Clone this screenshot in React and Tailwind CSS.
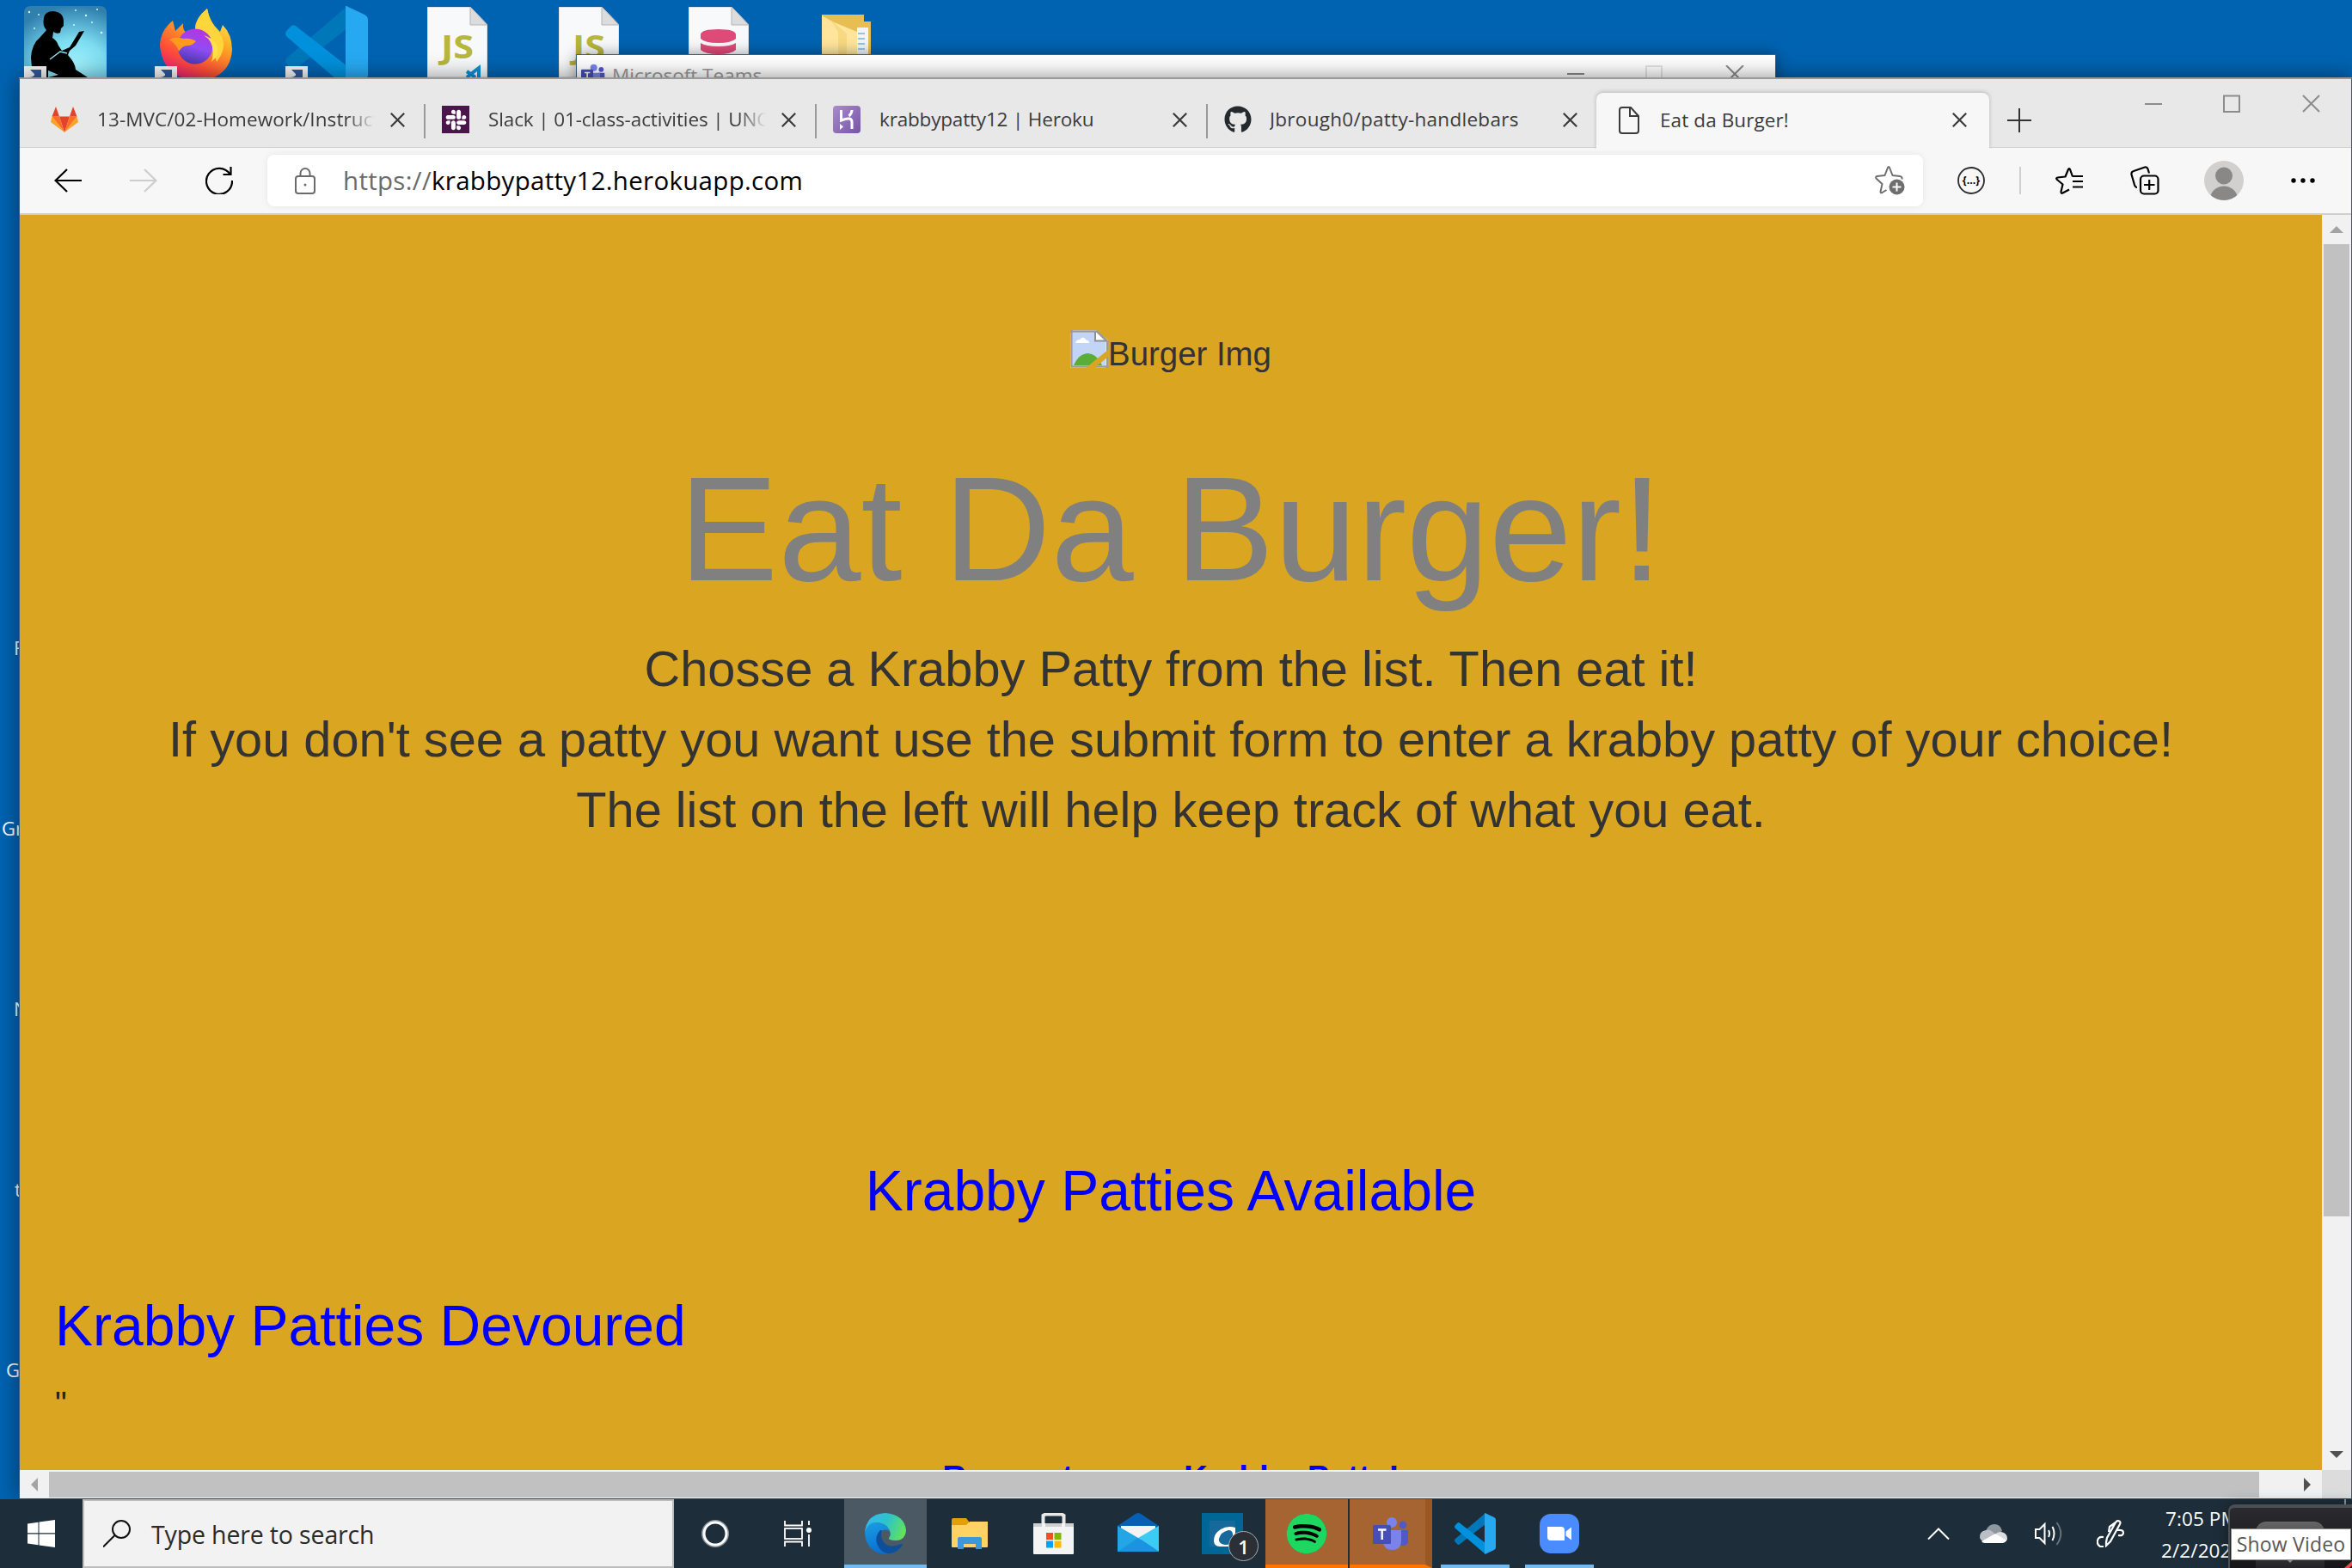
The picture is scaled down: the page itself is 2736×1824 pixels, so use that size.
import React from "react";
import { FaGithub, FaSpotify, FaSlack } from "react-icons/fa";

function VsCode({ className }) {
  return (
    <svg viewBox="0 0 96 96" preserveAspectRatio="none" className={className}>
      <path d="M72 0 2 60Q-2 64 2 68L7 73Q10 75 13 72L72 26Z" fill="#0077b9" />
      <path d="M72 96 2 36Q-2 32 2 28L7 23Q10 21 13 24L72 70Z" fill="#0190db" />
      <path d="M70 0Q72 0 73 1L92 10Q96 12 96 16V80Q96 84 92 86L73 95Q71 96 70 95Z" fill="#27a9f2" />
    </svg>
  );
}

function Shortcut({ className }) {
  return (
    <svg viewBox="0 0 26 13" className={className}>
      <rect width="26" height="13" fill="#f4f4f4" />
      <path d="M7 4H20V13H6Q13 12 12 9Z" fill="#31599b" />
    </svg>
  );
}

function DocIcon({ children, className }) {
  return (
    <svg viewBox="0 0 70 82" className={className}>
      <path d="M0 0H50L70 21V82H0Z" fill="#f8f9fa" stroke="#c9c9c9" />
      <path d="M50 0 70 21H50Z" fill="#dcdcdc" stroke="#b5b5b5" />
      {children}
    </svg>
  );
}

function TeamsIcon({ className }) {
  return (
    <svg viewBox="0 0 42 38" className={className}>
      <circle cx="22" cy="6" r="6" fill="#7b83eb" />
      <circle cx="35" cy="9" r="4.400" fill="#5059c9" />
      <path d="M30 15H41V27Q41 33 35 33H30Z" fill="#5059c9" />
      <path d="M12 15H33V27Q33 38 22.500 38T12 27Z" fill="#7b83eb" />
      <rect y="9" width="21" height="22" rx="1.500" fill="#464eb8" />
      <path d="M6 14.500H15.500M10.700 15V26" stroke="#fff" strokeWidth="2.400" fill="none" />
    </svg>
  );
}

function Kindle() {
  return (
    <svg viewBox="0 0 96 83" className="absolute left-[28px] top-[7px] h-[83px] w-[96px]">
      <defs>
        <radialGradient id="sky" cx=".6" cy=".85" r=".85">
          <stop offset="0" stopColor="#a5f4ff" />
          <stop offset=".45" stopColor="#7cdcf0" />
          <stop offset="1" stopColor="#3080ae" />
        </radialGradient>
      </defs>
      <path d="M8 0H88Q96 0 96 8V83H0V8Q0 0 8 0Z" fill="url(#sky)" />
      <g fill="#d5f4ff">
        <circle cx="6" cy="7" r="1.200" /><circle cx="17" cy="10" r="1" /><circle cx="60" cy="5" r="1" /><circle cx="72" cy="11" r="1.200" />
        <circle cx="85" cy="4" r="1" /><circle cx="90" cy="31" r="1.300" /><circle cx="12" cy="26" r="1" /><circle cx="58" cy="22" r="1" /><circle cx="79" cy="19" r="1" />
      </g>
      <path d="M23 14Q24 6 34 6Q46 7 46 18L46 23L43 26L42 31Q38 33 34 30L33 37Q38 40 40 46L44 52L53 48L61 35L64 30L70 29L60 46L53 52L51 57Q60 67 60 74L74 83H28L40 80L28 75L28 83H10L8 60Q9 44 18 37L26 28Q21 23 23 14Z" fill="#000" />
      <path d="M30 62 42 53 50 55" stroke="#8ee6f6" strokeWidth="1.500" fill="none" />
    </svg>
  );
}

function Firefox() {
  return (
    <svg viewBox="0 0 84 84" className="absolute left-[186px] top-[10px] h-[84px] w-[84px]">
      <defs>
        <linearGradient id="fx" x1=".8" y1="0" x2=".2" y2="1">
          <stop offset="0" stopColor="#fff44f" />
          <stop offset=".35" stopColor="#ffa624" />
          <stop offset=".7" stopColor="#ff4f36" />
          <stop offset="1" stopColor="#e31587" />
        </linearGradient>
        <linearGradient id="fxp" x1=".6" y1="0" x2=".3" y2="1">
          <stop offset="0" stopColor="#b833e1" />
          <stop offset=".5" stopColor="#8f4cf5" />
          <stop offset="1" stopColor="#4838a8" />
        </linearGradient>
      </defs>
      <path d="M15 14 18 26 27 17Q26 25 31 28L41 24Q40 12 55 0Q56 14 70 27L73 19Q84 30 84 48Q82 80 46 84Q4 82 0 44Q0 26 15 14Z" fill="url(#fx)" />
      <path d="M55 0Q58 16 70 29Q80 44 66 62L60 40Q56 24 41 25Q41 12 55 0Z" fill="#ffd53c" />
      <circle cx="41" cy="44" r="20.500" fill="url(#fxp)" />
      <path d="M11 36Q18 32 27 35Q36 34 42 38Q38 43 32 43Q26 43 22 50Q20 42 11 36Z" fill="#ff9a1e" />
      <path d="M51 31Q66 40 60 62L66 56Q72 38 51 31Z" fill="#ffe04a" />
    </svg>
  );
}

function DesktopIcons() {
  return (
    <div className="font-['Open_Sans',sans-serif] text-[22px] leading-[30px] text-white">
      <Kindle />
      <Shortcut className="absolute left-[28px] top-[77px] h-[13px] w-[26px]" />
      <Firefox />
      <Shortcut className="absolute left-[180px] top-[77px] h-[13px] w-[26px]" />
      <VsCode className="absolute left-[332px] top-[7px] h-[96px] w-[96px]" />
      <Shortcut className="absolute left-[332px] top-[77px] h-[13px] w-[26px]" />
      <DocIcon className="absolute left-[497px] top-[8px] h-[82px] w-[70px]">
        <text x="16" y="60" fontSize="38" fontWeight="700" fill="#b7b73b" fontFamily="Open Sans, sans-serif" textLength="38" lengthAdjust="spacingAndGlyphs">JS</text>
        <path d="M46 75 56 82M46 82 56 74 60 71V82" stroke="#0b8fd8" strokeWidth="4" fill="none" />
      </DocIcon>
      <DocIcon className="absolute left-[650px] top-[8px] h-[82px] w-[70px]">
        <text x="16" y="60" fontSize="38" fontWeight="700" fill="#b7b73b" fontFamily="Open Sans, sans-serif" textLength="38" lengthAdjust="spacingAndGlyphs">JS</text>
      </DocIcon>
      <DocIcon className="absolute left-[801px] top-[8px] h-[82px] w-[70px]">
        <path d="M14 32Q15 26 34.500 26T55 32V37Q50 42 34.500 42T14 37Z" fill="#df4b78" />
        <path d="M14 42Q20 46 34.500 46T55 42V50Q50 55 34.500 55T14 50Z" fill="#df4b78" />
      </DocIcon>
      <svg viewBox="0 0 58 50" className="absolute left-[956px] top-[17px] h-[50px] w-[58px]">
        <path d="M0 0H49V8H57V50H0Z" fill="#e8bd51" />
        <path d="M41 15H54V50H41Z" fill="#f2f5f7" />
        <path d="M42 22H50M42 28H50M42 34H50M42 40H50" stroke="#3d95c9" strokeWidth="1.200" />
        <path d="M0 1 12 8 41 20V50H0Z" fill="#ffe59b" />
        <path d="M10 6 29 22V50H19V20Z" fill="#f7d982" />
      </svg>
      <span className="absolute left-[16px] top-[738px]">F</span>
      <span className="absolute left-[2px] top-[948px]">Gr</span>
      <span className="absolute left-[16px] top-[1158px]">N</span>
      <span className="absolute left-[17px] top-[1368px]">t</span>
      <span className="absolute left-[7px] top-[1578px]">G</span>
    </div>
  );
}

function TeamsWindow() {
  return (
    <div className="absolute left-[670px] top-[63px] flex h-[60px] w-[1396px] items-start border border-[#3d5f80] bg-white shadow-[0_0_16px_rgba(0,0,0,0.4)]">
      <TeamsIcon className="ml-[5px] mt-[10px] h-[27px] w-[28px]" />
      <span className="ml-[8px] mt-[8px] whitespace-nowrap font-['Open_Sans',sans-serif] text-[22.500px] leading-[32px] text-[#999]">Microsoft Teams</span>
      <svg viewBox="0 0 206 24" className="ml-auto mr-[36px] mt-[12px] h-[24px] w-[206px]" fill="none" strokeWidth="2">
        <path d="M0 10H20" stroke="#8a8a8a" />
        <rect x="92" y="1" width="18" height="20" stroke="#e3e3e3" />
        <path d="M185 0 205 20M205 0 185 20" stroke="#8a8a8a" />
      </svg>
    </div>
  );
}

function CloseX({ className }) {
  return (
    <svg viewBox="0 0 17 17" className={className} fill="none" stroke="#3b3b3b" strokeWidth="2.200">
      <path d="M.8.8 16.200 16.200M16.200.8.8 16.200" />
    </svg>
  );
}

function Gitlab() {
  return (
    <svg viewBox="0 0 32 30" className="h-[30px] w-[32px]">
      <path d="M16 30 10 11.500H22Z" fill="#e24329" />
      <path d="M16 30 10 11.500H1.500Z" fill="#fc6d26" />
      <path d="M16 30 22 11.500H30.500Z" fill="#fc6d26" />
      <path d="M1.500 11.500 0 18 16 30ZM30.500 11.500 32 18 16 30Z" fill="#fca326" />
      <path d="M1.500 11.500 6 0 10 11.500ZM30.500 11.500 26 0 22 11.500Z" fill="#e24329" />
    </svg>
  );
}

function Heroku() {
  return (
    <svg viewBox="0 0 32 32" className="h-[32px] w-[32px]">
      <defs>
        <linearGradient id="hk" x1="0" y1="0" x2="1" y2="1">
          <stop offset="0" stopColor="#a98bcf" />
          <stop offset="1" stopColor="#7655a3" />
        </linearGradient>
      </defs>
      <rect width="32" height="32" rx="4" fill="url(#hk)" />
      <path d="M9.500 5V17Q22 12 22 19V27M22 5Q22 9 18.500 12" fill="none" stroke="#fff" strokeWidth="3" />
      <path d="M8 21 12 24.500 8 28Z" fill="#fff" />
    </svg>
  );
}

const tabs = [
  { title: "13-MVC/02-Homework/Instructions", fade: true, icon: <Gitlab />, cls: "tracking-[0.080px]" },
  {
    title: "Slack | 01-class-activities | UNC-RAL",
    fade: true,
    icon: <span className="flex h-[32px] w-[32px] items-center justify-center bg-[#4a154b]"><FaSlack className="h-[27px] w-[27px] text-white" /></span>,
    cls: "tracking-[-0.120px]",
  },
  { title: "krabbypatty12 | Heroku", icon: <Heroku />, cls: "tracking-[-0.180px]" },
  { title: "Jbrough0/patty-handlebars", icon: <FaGithub className="h-[32px] w-[32px] text-[#24292e]" />, cls: "-ml-[1px] tracking-[0.280px]" },
];

function TabBar() {
  return (
    <div className="flex h-[80px] border-b border-[#d0d0d0] bg-[#e8e8e8] pl-[16px] text-[#3b3b3b]">
      {tabs.map((t, i) => (
        <div key={t.title} className="relative flex w-[455px] shrink-0 items-center pl-[20px] pt-[15px]">
          <span className="flex w-[54px]">{t.icon}</span>
          <span className={"w-[323px] overflow-hidden whitespace-nowrap text-[22.500px] leading-[32px] " + t.cls + (t.fade ? " [mask-image:linear-gradient(to_right,#000_90%,transparent)]" : "")}>{t.title}</span>
          <CloseX className="ml-[18px] h-[17px] w-[17px]" />
          {i < 3 && <span className="absolute right-[-1px] top-[29px] h-[40px] w-[2px] bg-[#9a9a9a]" />}
        </div>
      ))}
      <div className="relative -ml-[2px] mt-[16px] flex h-[65px] w-[457px] shrink-0 items-center rounded-t-lg bg-[#f7f7f7] pb-[2px] pl-[26px] shadow-[0_-1px_5px_rgba(0,0,0,0.22)] [clip-path:inset(-8px_-8px_0_-8px)]">
        <svg viewBox="0 0 24 32" className="h-[32px] w-[24px]" fill="none" stroke="#3b3b3b" strokeWidth="2">
          <path d="M4 1H14L23 11V28Q23 31 20 31H4Q1 31 1 28V4Q1 1 4 1ZM13 1V11H23" />
        </svg>
        <span className="ml-[24px] w-[323px] text-[22.500px] leading-[32px] tracking-[0.100px]">Eat da Burger!</span>
        <CloseX className="ml-[17px] h-[17px] w-[17px]" />
      </div>
      <svg viewBox="0 0 28 28" className="ml-[21px] mt-[34px] h-[28px] w-[28px]" stroke="#333" strokeWidth="2">
        <path d="M0 14H28M14 0V28" />
      </svg>
      <svg viewBox="0 0 204 22" className="ml-auto mr-[36px] mt-[18px] h-[22px] w-[204px]" fill="none" stroke="#8c8c8c" strokeWidth="2">
        <path d="M0 11H20M184 1 203 20M203 1 184 20" />
        <rect x="92" y="1.500" width="18" height="18.500" />
      </svg>
    </div>
  );
}

function Toolbar() {
  return (
    <div className="flex h-[78px] items-center border-b-2 border-[#cfcfcf] bg-[#f7f7f7]">
      <svg viewBox="0 0 32 28" className="ml-[40px] h-[28px] w-[32px] shrink-0" fill="none" stroke="#000" strokeWidth="2.200">
        <path d="M32 14H1.500M15 1 1.500 14 15 27" />
      </svg>
      <svg viewBox="0 0 32 28" className="ml-[56px] h-[28px] w-[32px] shrink-0" fill="none" stroke="#cdcdcd" strokeWidth="2.200">
        <path d="M0 14H30.500M17 1 30.500 14 17 27" />
      </svg>
      <svg viewBox="0 0 32 32" className="ml-[56px] h-[32px] w-[32px] shrink-0" fill="none" stroke="#000" strokeWidth="2.200">
        <path d="M28.500 8.500A15 15 0 1 0 31 16M29.500 0V9H20.500" />
      </svg>
      <div className="ml-[40px] flex h-[60px] w-[1926px] shrink-0 items-center rounded-lg bg-white shadow-[0_0_8px_rgba(0,0,0,0.07)]">
        <svg viewBox="0 0 24 31" className="ml-[32px] h-[31px] w-[24px]" fill="none" stroke="#6b6b6b" strokeWidth="2">
          <rect x="1" y="10" width="22" height="20" rx="3" />
          <path d="M6.500 10V6.500A5.500 5.500 0 0 1 17.500 6.500V10" />
          <circle cx="12" cy="20" r="1.500" fill="#6b6b6b" stroke="none" />
        </svg>
        <span className="ml-[32px] whitespace-nowrap text-[29.500px] leading-[40px] tracking-[0.300px] text-black"><span className="text-[#6b6b6b]">https://</span>krabbypatty12.herokuapp.com</span>
        <svg viewBox="0 0 35 34" className="ml-auto mr-[21px] h-[34px] w-[35px]" fill="none" stroke="#6e6e6e" strokeWidth="2" strokeLinejoin="round">
          <path d="M31.500 15.500Q32 12.500 29 12L20.500 11 17 2Q16 0 15 2L11.500 11 2.500 12Q0 13 2 15L8.500 21 6.500 30Q6.500 32 8.500 31L13.500 28" />
          <circle cx="25.500" cy="24.500" r="9" fill="#6e6e6e" stroke="none" />
          <path d="M25.500 19.500V29.500M20.500 24.500H30.500" stroke="#fff" />
        </svg>
      </div>
      <svg viewBox="0 0 32 32" className="ml-[40px] h-[32px] w-[32px] shrink-0">
        <circle cx="16" cy="16" r="15" fill="none" stroke="#2b2b2b" strokeWidth="1.800" />
        <text x="16" y="20" textAnchor="middle" fontSize="12.500" fontWeight="700" fontFamily="Open Sans, sans-serif">{"{...}"}</text>
      </svg>
      <span className="ml-[40px] h-[32px] w-[2px] shrink-0 bg-[#cfcfcf]" />
      <svg viewBox="0 0 32 32" className="ml-[40px] h-[32px] w-[32px] shrink-0" fill="none" stroke="#000" strokeWidth="2.200" strokeLinejoin="round">
        <path d="M20 11.500 17 3Q16 1 15 3L11.500 11.500 2.500 12.500Q0 13 2 15L8.500 20.500 6.500 29Q6.500 31.500 8.500 30.500L16 26.500M20 11H32M20 17H32M20 23.500H32" />
      </svg>
      <svg viewBox="0 0 34 34" className="ml-[55px] h-[34px] w-[34px] shrink-0" fill="none" stroke="#000" strokeWidth="2.200">
        <rect x="12" y="11.500" width="20.500" height="21" rx="4" />
        <path d="M22.200 16V28M16 22H28.500M22 8.500 20.500 3.500Q19.500 1 17 1.500L4 6Q1 7 1.500 10L5 22Q6 25 8 25" />
      </svg>
      <svg viewBox="0 0 46 46" className="ml-[52px] h-[46px] w-[46px] shrink-0">
        <clipPath id="av"><circle cx="23" cy="23" r="23" /></clipPath>
        <g clipPath="url(#av)">
          <rect width="46" height="46" fill="#d2d0ce" />
          <circle cx="23" cy="17.500" r="10" fill="#8a8886" />
          <circle cx="23" cy="46" r="16.500" fill="#8a8886" />
        </g>
      </svg>
      <svg viewBox="0 0 28 6" className="ml-[55px] h-[6px] w-[28px] shrink-0">
        <circle cx="3" cy="3" r="2.700" /><circle cx="14" cy="3" r="2.700" /><circle cx="25" cy="3" r="2.700" />
      </svg>
    </div>
  );
}

function BrokenImage() {
  return (
    <svg viewBox="0 0 44 44" className="h-[44px] w-[44px]">
      <path d="M0 0H30L44 12V44H0Z" fill="#fff" />
      <path d="M3 3H28V12H41V41H3Z" fill="#c3d5f7" />
      <path d="M6 15Q7 11 11 11Q15 6 18 11Q22 12 22 15Z" fill="#fff" />
      <path d="M4 41Q10 27 21 27Q31 28 37 41Z" fill="#5aae38" />
      <path d="M1.500 0V42.500H44M0 1.500H31L43 13V44" fill="none" stroke="#9a9a9a" strokeWidth="2.500" />
      <path d="M29 2V12.500H42" fill="none" stroke="#8f8f8f" strokeWidth="2" />
      <path d="M44 23V31L28 44H18Z" fill="#daa520" />
    </svg>
  );
}

function Page() {
  return (
    <div className="h-[1460px] w-[2678px] overflow-hidden bg-[#daa520] pt-[132px] text-center font-['Liberation_Sans',Arial,sans-serif] text-[38.400px] leading-[60px] text-[#333]">
      <div className="flex h-[60px] justify-center">
        <div className="pt-[2px]"><BrokenImage /></div>
        <span>Burger Img</span>
      </div>
      <h1 className="mt-[68px] text-[173px] leading-[210px] text-[#808080]">Eat Da Burger!</h1>
      <p className="mt-[17px] text-[57.750px] leading-[82px]">
        Chosse a Krabby Patty from the list. Then eat it!<br />
        If you don't see a patty you want use the submit form to enter a krabby patty of your choice!<br />
        The list on the left will help keep track of what you eat.
      </p>
      <h2 className="mt-[361px] text-[66px] leading-[82px] text-[#0000ff]">Krabby Patties Available</h2>
      <h2 className="mt-[75px] pl-[41px] text-left text-[66px] leading-[82px] text-[#0000ff]">Krabby Patties Devoured</h2>
      <p className="mt-[20px] pl-[41px] text-left text-[#222]">"</p>
      <p className="mt-[26px] text-[38.600px] font-bold text-[#0000ff]">Request a new Krabby Patty!</p>
    </div>
  );
}

function Arrow({ d, fill, className }) {
  return <svg viewBox="0 0 16 16" className={className}><path d={d} fill={fill} /></svg>;
}

function Browser() {
  return (
    <div className="absolute left-[22px] top-[90px] h-[1653px] w-[2714px] border-x border-t-2 border-x-[#345c85] border-t-[#999] bg-[#f1f1f1] font-['Open_Sans',sans-serif] shadow-[0_0_24px_rgba(0,0,0,0.45)]">
      <TabBar />
      <Toolbar />
      <div className="flex">
        <Page />
        <div className="flex w-[34px] flex-col items-center justify-between bg-[#f1f1f1]">
          <div className="flex flex-col items-center">
            <Arrow d="M0 12 8 4 16 12Z" fill="#a3a3a3" className="mb-[9px] mt-[9px] h-[16px] w-[16px]" />
            <span className="h-[1131px] w-[30px] bg-[#c1c1c1]" />
          </div>
          <Arrow d="M0 4 8 12 16 4Z" fill="#505050" className="mb-[10px] h-[16px] w-[16px]" />
        </div>
      </div>
      <div className="flex h-[33px]">
        <div className="flex w-[2678px] items-center bg-[#f1f1f1]">
          <Arrow d="M12 0 4 8 12 16Z" fill="#a3a3a3" className="ml-[9px] mr-[9px] h-[16px] w-[16px]" />
          <span className="h-[30px] w-[2571px] bg-[#c1c1c1]" />
          <Arrow d="M4 0 12 8 4 16Z" fill="#505050" className="ml-[48px] h-[16px] w-[16px]" />
        </div>
        <span className="w-[34px] bg-[#dcdcdc]" />
      </div>
    </div>
  );
}

function EdgeIcon() {
  return (
    <svg viewBox="0 0 48 48" className="h-[48px] w-[48px]">
      <defs>
        <linearGradient id="e1" x1="0" y1=".3" x2="1" y2=".6">
          <stop offset="0" stopColor="#35b8f1" />
          <stop offset=".5" stopColor="#2ec4c9" />
          <stop offset="1" stopColor="#62e35a" />
        </linearGradient>
        <linearGradient id="e2" x1="0" y1="0" x2=".3" y2="1">
          <stop offset="0" stopColor="#1b9de2" />
          <stop offset="1" stopColor="#0a6fd0" />
        </linearGradient>
      </defs>
      <path d="M0 22Q2 1 24 0Q46 2 48 20Q47 32 36 32Q27 32 28 29Q31 26 29 21Q26 12 14 11Q4 13 0 22Z" fill="url(#e1)" />
      <path d="M0 24Q2 11 14 11Q26 12 29 21Q22 17 18 23Q14 33 22 39Q30 45 42 37Q36 48 24 48Q2 46 0 24Z" fill="url(#e2)" />
      <path d="M18 20Q9 30 17 41Q22 48 30 47Q39 45 44 37Q44 35 42 36Q28 42 22 34Q17 28 20 20Z" fill="#0e4f9c" />
    </svg>
  );
}

function Taskbar() {
  return (
    <div className="absolute bottom-0 left-0 flex h-[80px] w-[2736px] bg-[#1d2d39] font-['Open_Sans',sans-serif]">
      <div className="flex w-[96px] items-center justify-center">
        <svg viewBox="0 0 32 32" className="h-[32px] w-[32px]" fill="#fff">
          <path d="M0 4.500 12.500 2.800V15.300H0ZM13.500 2.600 32 0V15.300H13.500ZM0 16.500H12.500V29.200L0 27.500ZM13.500 16.500H32V32L13.500 29.400Z" />
        </svg>
      </div>
      <div className="flex w-[688px] items-center border-2 border-[#bdbdbd] bg-[#f2f2f2]">
        <svg viewBox="0 0 32 32" className="ml-[22px] h-[32px] w-[32px]" fill="none" stroke="#111" strokeWidth="2">
          <circle cx="21" cy="11" r="10" /><path d="M13.500 18 0 31.500" />
        </svg>
        <span className="ml-[24px] mt-[2px] text-[28.500px] leading-[40px] tracking-[-0.150px] text-[#2b2b2b]">Type here to search</span>
      </div>
      <div className="flex w-[96px] items-center justify-center">
        <svg viewBox="0 0 32 32" className="h-[32px] w-[32px]" fill="none">
          <circle cx="16" cy="16" r="14" stroke="#8b949b" strokeWidth="4" /><circle cx="16" cy="16" r="13" stroke="#fff" strokeWidth="3" />
        </svg>
      </div>
      <div className="flex w-[102px] items-center pl-[32px]">
        <svg viewBox="0 0 33 30" className="h-[30px] w-[33px]" fill="none" stroke="#fff" strokeWidth="1.800">
          <path d="M1 0V5.500H21V0M1 30V24.500H21V30M29 0V5M29 16V30" /><rect x="1" y="9" width="20" height="12" />
          <circle cx="29" cy="11" r="3" fill="#fff" stroke="none" />
        </svg>
      </div>
      <div className="flex w-[96px] items-center justify-center border-b-4 border-[#76b9ed] bg-[#4a5963] pt-[4px]"><EdgeIcon /></div>
      <div className="flex w-[100px] items-center justify-center">
        <svg viewBox="0 0 42 36" className="h-[36px] w-[42px]">
          <path d="M0 2Q0 0 2 0H17L20 4V8H0Z" fill="#e29f07" />
          <path d="M0 8H17L21 4H42V33Q42 34 41 34H1Q0 34 0 33Z" fill="#fed364" />
          <path d="M7 24Q7 22 9 22H33Q35 22 35 24V36H28V30H14V36H7Z" fill="#3d97dc" />
        </svg>
      </div>
      <div className="flex w-[94px] items-center justify-center">
        <svg viewBox="0 0 47 48" className="h-[48px] w-[47px]">
          <path d="M11.500 15V3L14 1.500H33L35.500 3V15" fill="none" stroke="#e8e8e8" strokeWidth="4" />
          <path d="M0 12H47V47Q47 48 46 48H1Q0 48 0 47Z" fill="#f4f4f4" />
          <path d="M0 12H10V16H0ZM14 12H33V16H14ZM37 12H47V16H37Z" fill="#cfcfcf" />
          <path d="M15 23H23V31H15Z" fill="#f25022" /><path d="M24.500 23H32.500V31H24.500Z" fill="#7fba00" />
          <path d="M15 32.500H23V40.500H15Z" fill="#00a4ef" /><path d="M24.500 32.500H32.500V40.500H24.500Z" fill="#ffb900" />
        </svg>
      </div>
      <div className="flex w-[104px] items-center justify-center pb-[4px]">
        <svg viewBox="0 0 48 45" className="h-[45px] w-[48px]">
          <path d="M0 15 21 1Q24-1 27 1L48 15V30H0Z" fill="#0460b5" />
          <path d="M4 15H44V24L24 32 4 24Z" fill="#f3f3f3" />
          <path d="M0 15 24 29 48 45H0Z" fill="#23a5e6" />
          <path d="M48 15 24 29 48 45Z" fill="#3ccbf4" />
          <path d="M24 29 48 45H0Z" fill="#1a93e0" />
        </svg>
      </div>
      <div className="relative flex w-[96px] items-center pl-[22px]">
        <svg viewBox="0 0 48 48" className="h-[48px] w-[48px]">
          <rect width="48" height="48" fill="#006695" />
          <rect x="9" y="9" width="30" height="30" fill="#17699b" />
          <path d="M39 17Q30 14 22 19Q14 24 14 32Q14 39 21 39H39V33Q34 37 27 37Q19 36 20 30Q22 22 31 20Q37 20 36 28L39 31Z" fill="#fff" />
        </svg>
        <span className="absolute left-[53px] top-[37px] flex h-[35px] w-[35px] items-center justify-center rounded-full border border-[#aaa] bg-[#2b3036] text-[22px] font-semibold leading-none text-white">1</span>
      </div>
      <div className="flex w-[96px] items-center justify-center border-b-4 border-[#ff7300] bg-[#a56431] pt-[4px]">
        <span className="flex h-[46px] w-[46px] items-center justify-center rounded-full bg-black"><FaSpotify className="h-[48px] w-[48px] shrink-0 text-[#1ed760]" /></span>
      </div>
      <div className="ml-[2px] flex w-[96px] items-center border-b-4 border-r-[8px] border-b-[#ff7300] border-r-[#9b5722] bg-[#a56431] pl-[27px] pt-[4px]">
        <TeamsIcon className="h-[38px] w-[42px]" />
      </div>
      <div className="ml-[10px] flex w-[80px] items-center justify-center border-b-4 border-[#76b9ed] pt-[4px]"><VsCode className="h-[48px] w-[48px]" /></div>
      <div className="ml-[18px] flex w-[80px] items-center justify-center border-b-4 border-[#76b9ed] pt-[4px]">
        <svg viewBox="0 0 46 46" className="h-[46px] w-[46px]">
          <rect width="46" height="46" rx="13" fill="#4a8cff" />
          <path d="M9 15H25Q29 15 29 19V31H13Q9 31 9 27ZM30.500 20.500 37 15.500V30.500L30.500 25.500Z" fill="#fff" />
        </svg>
      </div>
      <div className="ml-[388px] flex items-center text-white">
        <svg viewBox="0 0 26 14" className="h-[14px] w-[26px]" fill="none" stroke="#fff" strokeWidth="2"><path d="M1 13.500 13 1.500 25 13.500" /></svg>
        <svg viewBox="0 0 32 22" className="ml-[35px] h-[22px] w-[32px]">
          <path d="M7 8Q10 0 17 0Q24 0 26 8L16 14Z" fill="#8e979e" />
          <path d="M0 15Q0 8 7 7Q12 5 17 11L10 20H4Q0 18 0 15Z" fill="#b9bfc4" />
          <path d="M18 12Q22 7 28 10Q32 12 32 17Q31 21 28 20Z" fill="#dcdfe1" />
          <path d="M2 20 18 11 31 19Q29 22 27 22H6Q3 22 2 20Z" fill="#fff" />
        </svg>
        <svg viewBox="0 0 32 28" className="ml-[32px] h-[28px] w-[32px]" fill="none" stroke="#fff" strokeWidth="2">
          <path d="M1 9H5.500L11.500 3V25L5.500 19H1ZM16 10Q18 14 16 18M20.500 6Q24.500 14 20.500 22" /><path d="M25.500 1Q35 14 25.500 27" stroke="#65727b" />
        </svg>
        <svg viewBox="0 0 32 32" className="ml-[40px] h-[32px] w-[32px]" fill="none" stroke="#fff" strokeWidth="2.200">
          <path d="M11 26 12 21 22 3Q24 0 27 2Q28 3 27 5L16 25 11 30ZM22 3 15 8 14 14M8 31H4Q0 29 1 24Q2 19 8 20M24 12Q31 11 31 15Q31 19 25 18" />
        </svg>
        <div className="ml-[43px] flex flex-col whitespace-nowrap pt-[1px] text-[22.500px] leading-[37px] tracking-[0.100px]">
          <span className="pl-[5px]">7:05 PM</span>
          <span>2/2/2021</span>
        </div>
      </div>
    </div>
  );
}

function VideoPopup() {
  return (
    <>
      <span className="absolute left-[2727px] top-[1744px] h-[10px] w-[2px] bg-[#8a949b]" />
      <div className="absolute left-[2592px] top-[1750px] h-[74px] w-[144px] overflow-hidden rounded-tl-[8px] border-l-2 border-t-4 border-[#4a4f54] bg-gradient-to-b from-[#2b2b2f] to-[#161618] shadow-[0_0_16px_rgba(0,0,0,0.35)]">
        <div className="ml-[30px] mt-[16px] h-[60px] w-[80px] rounded-t-[12px] bg-gradient-to-b from-[#666] to-[#1d1d1f]" />
      </div>
      <svg viewBox="0 0 80 10" className="absolute bottom-0 right-0 h-[10px] w-[80px]">
        <path d="M5 1H11L8 4Z" fill="#888" /><path d="M71 10 80 2V7L77 10Z" fill="#f04848" />
      </svg>
      <div className="absolute left-[2595px] top-[1778px] flex h-[37px] w-[140px] items-center justify-center whitespace-nowrap border border-[#888] bg-white font-['Open_Sans',sans-serif] text-[23px] leading-none tracking-[0.200px] text-[#575757]">Show Video</div>
    </>
  );
}

export default function App() {
  return (
    <div className="relative h-[1824px] w-[2736px] overflow-hidden bg-[#0063b1]">
      <DesktopIcons />
      <TeamsWindow />
      <Browser />
      <Taskbar />
      <VideoPopup />
    </div>
  );
}
